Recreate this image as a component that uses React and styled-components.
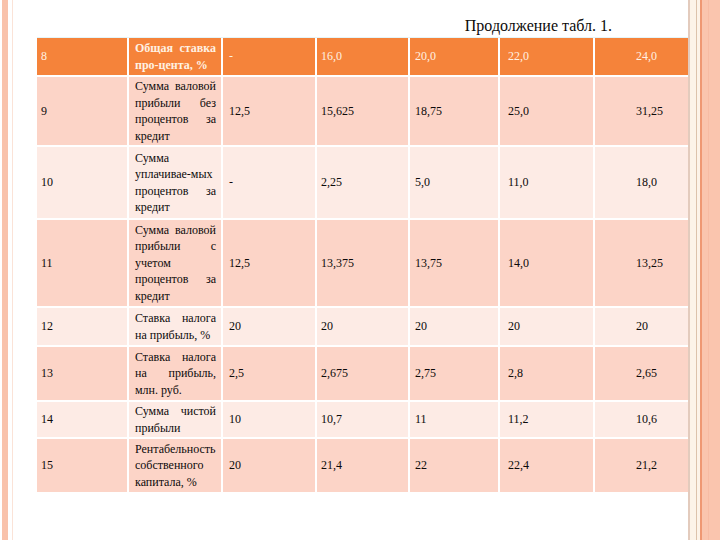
import React from "react";
import styled, { createGlobalStyle } from "styled-components";

const GlobalStyle = createGlobalStyle`
  html, body {
    margin: 0;
    padding: 0;
    background: #ffffff;
  }
`;

const Page = styled.div`
  display: flex;
  width: 720px;
  height: 540px;
  overflow: hidden;
  background: #ffffff;
  font-family: "Liberation Serif", "Times New Roman", serif;
  color: #0c0a0a;
`;

const LeftRail = styled.div`
  flex: 0 0 14px;
  background: linear-gradient(
    to right,
    #ffffff 0 2px,
    #f9c2ab 2px 8px,
    #ffffff 8px 12px,
    #fbe3d7 12px 13px,
    #ffffff 13px
  );
`;

const RightRail = styled.div`
  flex: 0 0 32px;
  background: linear-gradient(
    to right,
    #e3cbbd 0 2px,
    #fcf3e8 2px 8px,
    #dcc2ab 8px 9px,
    #fcf3e8 9px 12px,
    #ef9873 12px 14px,
    #fac5ae 14px 20px,
    #f7bca4 20px 21px,
    #fac5ae 21px
  );
`;

const Content = styled.div`
  flex: 1;
  display: flex;
  flex-direction: column;
  padding-top: 17px;
`;

const Caption = styled.div`
  align-self: flex-end;
  margin-right: 76px;
  font-size: 16px;
  line-height: 18px;
  color: #0c0a0a;
`;

const Grid = styled.div`
  display: grid;
  margin: 3px 0 0 23px;
  grid-template-columns: 90px 92px 92px 91px 88px 93px 93px;
  grid-template-rows: 37px 68px 71px 86px 37px 53px 35px 53px;
  gap: 2px;
  box-shadow: 0 -1px 0 #e4f5f9;
`;

const Row = styled.div`
  display: contents;
  --row-bg: ${(p) =>
    p.$tone === "head" ? "#f5833a" : p.$tone === "light" ? "#fdebe5" : "#fcd4c7"};
  --row-fg: ${(p) => (p.$tone === "head" ? "#fff1e2" : "#0c0a0a")};
`;

const Cell = styled.div`
  display: flex;
  align-items: center;
  background: var(--row-bg);
  color: var(--row-fg);
  font-size: 12px;
  line-height: 16.5px;
  padding-left: ${(p) => p.$pad}px;
  padding-right: 4px;
`;

const TextCell = styled(Cell)`
  padding-right: 5px;
  font-weight: ${(p) => (p.$bold ? 700 : 400)};

  span {
    display: block;
    width: 100%;
    text-align: justify;
  }
`;

const pads = [4, 6, 6, 4, 5, 8, 41];

const header = ["8", "Общая ставка про-цента, %", "-", "16,0", "20,0", "22,0", "24,0"];

const rows = [
  ["9", "Сумма валовой прибыли без процентов за кредит", "12,5", "15,625", "18,75", "25,0", "31,25"],
  ["10", "Сумма уплачивае-мых процентов за кредит", "-", "2,25", "5,0", "11,0", "18,0"],
  ["11", "Сумма валовой прибыли с учетом процентов за кредит", "12,5", "13,375", "13,75", "14,0", "13,25"],
  ["12", "Ставка налога на прибыль, %", "20", "20", "20", "20", "20"],
  ["13", "Ставка налога на прибыль, млн. руб.", "2,5", "2,675", "2,75", "2,8", "2,65"],
  ["14", "Сумма чистой прибыли", "10", "10,7", "11", "11,2", "10,6"],
  ["15", "Рентабельность собственного капитала, %", "20", "21,4", "22", "22,4", "21,2"],
];

const TableRow = ({ cells, tone }) => (
  <Row $tone={tone}>
    {cells.map((value, i) =>
      i === 1 ? (
        <TextCell key={i} $pad={pads[i]} $bold={tone === "head"}>
          <span>{value}</span>
        </TextCell>
      ) : (
        <Cell key={i} $pad={pads[i]}>
          {value}
        </Cell>
      )
    )}
  </Row>
);

export default function App() {
  return (
    <>
      <GlobalStyle />
      <Page>
        <LeftRail />
        <Content>
          <Caption>Продолжение табл. 1.</Caption>
          <Grid>
            <TableRow cells={header} tone="head" />
            {rows.map((r, i) => (
              <TableRow key={r[0]} cells={r} tone={i % 2 === 0 ? "dark" : "light"} />
            ))}
          </Grid>
        </Content>
        <RightRail />
      </Page>
    </>
  );
}
